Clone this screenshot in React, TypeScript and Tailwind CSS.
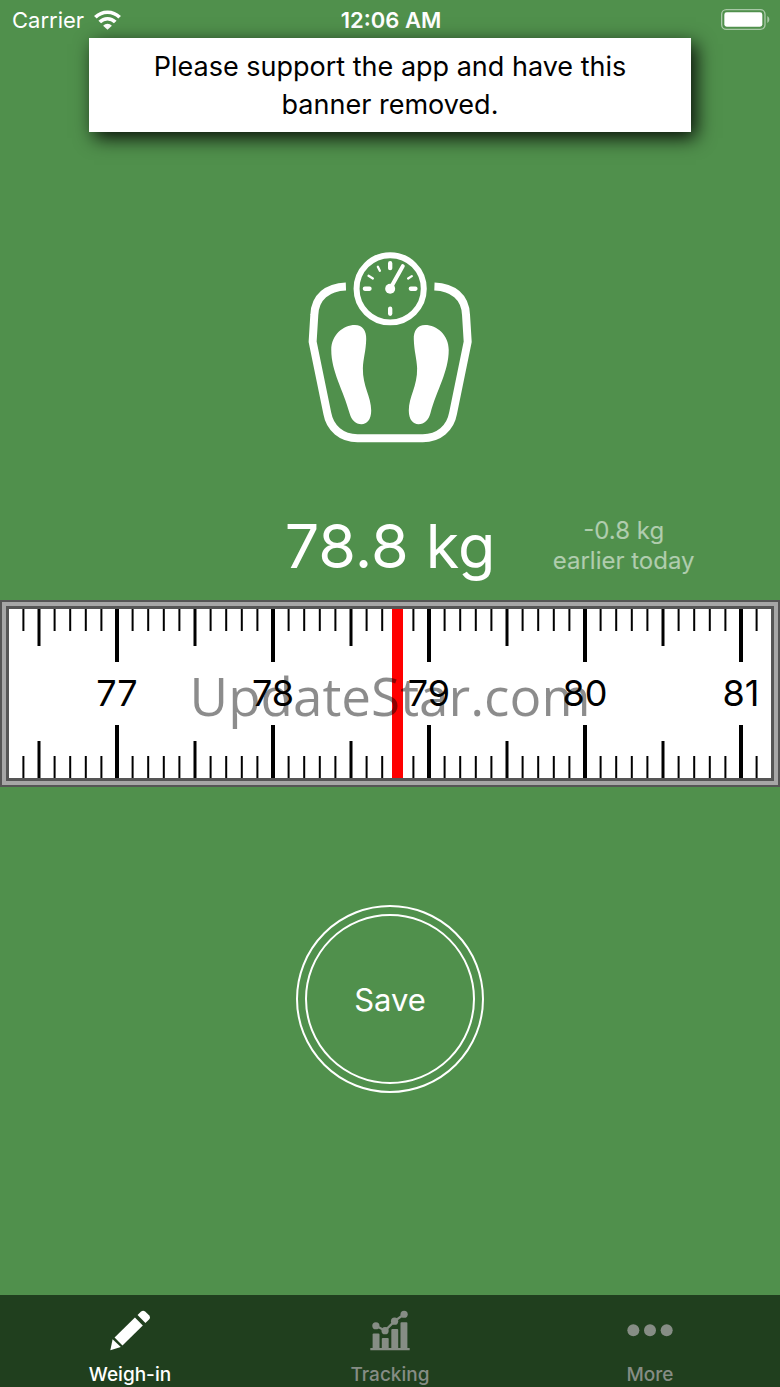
import type { ReactNode } from 'react'

// Weigh-in screen: current reading, the ruler picker and the save button.

const FIRST_TICK = 764 // tenths of a kilo
const LAST_TICK = 811
const UNIT_WIDTH = 156 // drawing units per kilo
const RULER_HEIGHT = 169
const VALUE = 78.8

type Tick = { tenths: number; x: number; length: number; width: number }

const TICKS: Tick[] = []
for (let tenths = FIRST_TICK; tenths <= LAST_TICK; tenths++) {
  const x = 108 + ((tenths - 770) * UNIT_WIDTH) / 10
  if (tenths % 10 === 0) TICKS.push({ tenths, x, length: 53, width: 4 })
  else if (tenths % 5 === 0) TICKS.push({ tenths, x, length: 37, width: 3 })
  else TICKS.push({ tenths, x, length: 22, width: 2 })
}

function WifiIcon() {
  return (
    <svg viewBox="0 0 80 58" className="w-[27px] h-5" aria-hidden="true">
      <g fill="none" stroke="white" strokeWidth="11">
        <path d="M4 21 C24 1 56 1 76 21" />
        <path d="M17 35 C30 22 50 22 63 35" />
      </g>
      <path d="M40 58 L27 46 C34 38 46 38 53 46 Z" fill="white" />
    </svg>
  )
}

function BatteryIcon() {
  return (
    <svg viewBox="0 0 147 63" className="w-[49px] h-[21px]" aria-label="Battery full">
      <rect x="2" y="2" width="130" height="59" rx="14" fill="none" stroke="white" strokeOpacity="0.5" strokeWidth="4" />
      <rect x="10" y="10" width="114" height="43" rx="7" fill="white" />
      <path d="M139 21 C147 25 147 38 139 42 Z" fill="white" fillOpacity="0.5" />
    </svg>
  )
}

const FOOT =
  'M180 255 C203 255 215 272 214 298 C213 335 205 355 204 385 C203 440 229 470 229 512 C229 540 216 553 200 553 C182 553 170 541 164 520 C145 450 109 395 109 330 C109 285 145 255 180 255 Z'
const PLATE =
  'M153 139 C98 141 60 170 58 225 L53 305 L97 520 C105 565 140 595 188 595 H384 C432 595 467 565 475 520 L519 305 L514 225 C512 170 474 141 419 139'

function ScaleIcon() {
  return (
    <svg viewBox="0 0 571 645" className="w-[190px] h-[215px]" aria-hidden="true">
      <g fill="white">
        <path d={FOOT} />
        <path d={FOOT} transform="translate(571 0) scale(-1 1)" />
        <circle cx="286" cy="146" r="15" />
      </g>
      <g fill="none" stroke="white" strokeWidth="24" strokeLinejoin="round">
        <path d={PLATE} />
        <circle cx="286" cy="146" r="101" strokeWidth="18" />
      </g>
      <g stroke="white" strokeLinecap="round">
        <path d="M286 69 V84 M286 206 V221 M210 146 H224 M348 146 H362" strokeWidth="13" />
        <path d="M221 107 L234 115 M249 80 L255 92 M351 108 L340 115" strokeWidth="7" />
        <path d="M286 146 L324 78" strokeWidth="12" />
      </g>
    </svg>
  )
}

function PencilIcon() {
  return (
    <svg viewBox="146 70 128 128" className="w-[42px] h-[42px]" fill="currentColor" aria-hidden="true">
      <path d="M150 196 L157 162 L182 186 Z" />
      <path d="M163 157 L225 96 L249 120 L187 181 Z" />
      <path d="M233 88 L243 78 Q250 72 257 78 L268 89 Q274 96 268 102 L257 113 Z" />
    </svg>
  )
}

function ChartIcon() {
  return (
    <svg viewBox="117 70 126 128" className="w-[42px] h-[42px]" fill="currentColor" aria-hidden="true">
      <path d="M120 189 H240 V196 H120 Z" />
      <path d="M127 190 V148 Q127 145 130 145 H145 Q148 145 148 148 V190 Z" />
      <path d="M155 190 V161 Q155 158 158 158 H173 Q176 158 176 161 V190 Z" />
      <path d="M184 190 V134 Q184 131 187 131 H202 Q205 131 205 134 V190 Z" />
      <path d="M212 190 V113 Q212 110 215 110 H230 Q233 110 233 113 V190 Z" />
      <path d="M137 121 L165 136 L194 107 L223 86" fill="none" stroke="currentColor" strokeWidth="7" />
      <circle cx="137" cy="121" r="11" />
      <circle cx="165" cy="136" r="11" />
      <circle cx="194" cy="107" r="11" />
      <circle cx="223" cy="86" r="11" />
    </svg>
  )
}

function DotsIcon() {
  return (
    <svg viewBox="0 0 138 126" className="w-[46px] h-[42px]" fill="currentColor" aria-hidden="true">
      <circle cx="19" cy="64" r="18" />
      <circle cx="69" cy="64" r="18" />
      <circle cx="119" cy="64" r="18" />
    </svg>
  )
}

function Ruler() {
  const needleX = 388
  return (
    <div className="relative border-2 border-[#555] bg-[#555]">
      <div className="border-4 border-[#a6a6a6]">
        <div className="border-[3px] border-[#555] bg-white">
          <svg viewBox={`0 0 762 ${RULER_HEIGHT}`} className="block w-full" role="img" aria-label={`${VALUE} kg`}>
            {TICKS.map((t) => (
              <g key={t.tenths}>
                <rect x={t.x - t.width / 2} y="0" width={t.width} height={t.length} />
                <rect x={t.x - t.width / 2} y={RULER_HEIGHT - t.length} width={t.width} height={t.length} />
              </g>
            ))}
            <rect x={needleX - 5} y="0" width="11" height={RULER_HEIGHT} fill="red" />
            {TICKS.filter((t) => t.tenths % 10 === 0).map((t) => (
              <text key={t.tenths} x={t.x} y="97" textAnchor="middle" fontSize="36">
                {t.tenths / 10}
              </text>
            ))}
          </svg>
        </div>
      </div>
      <span className="absolute inset-0 flex items-center justify-center pt-1 font-['Open_Sans',sans-serif] text-[53px] leading-none text-black/45 pointer-events-none">
        UpdateStar.com
      </span>
    </div>
  )
}

function Tab({ label, active, children }: { label: string; active?: boolean; children: ReactNode }) {
  return (
    <a
      href="#"
      aria-current={active ? 'page' : undefined}
      className={`flex flex-1 flex-col items-center pt-3.5 ${active ? 'text-white' : 'text-[#868d85]'}`}
    >
      {children}
      <span className="mt-3 text-[19px] leading-6 font-medium">{label}</span>
    </a>
  )
}

export default function App() {
  return (
    <div className="min-h-screen flex flex-col bg-[#50904c] text-white font-[Inter,sans-serif]">
      <header className="grid grid-cols-3 items-center h-[38px] pl-3 pr-2.5">
        <div className="flex items-center gap-2.5 pt-0.5 text-[22px] leading-8">
          Carrier
          <WifiIcon />
        </div>
        <time className="pt-0.5 text-center text-[22px] leading-8 font-semibold">12:06 AM</time>
        <div className="flex justify-end">
          <BatteryIcon />
        </div>
      </header>

      <p className="mx-[89px] px-12 pt-2.5 pb-2 bg-white text-black text-center text-[27px] leading-[38px] shadow-[5px_6px_18px_rgba(0,0,0,0.9)]">
        Please support the app and have this banner removed.
      </p>

      <main className="flex flex-col">
        <div className="flex justify-center mt-[108px]">
          <ScaleIcon />
        </div>

        <div className="grid grid-cols-[1fr_auto_1fr] items-center mt-[52px] pb-[15px] h-[93px]">
          <h1 className="col-start-2 text-[61px] leading-none">78.8 kg</h1>
          <p className="pr-7 text-center text-2xl leading-[30px] text-white/55">
            -0.8 kg
            <br />
            earlier today
          </p>
        </div>

        <Ruler />

        <button
          type="button"
          className="self-center mt-[118px] p-[7px] size-[188px] rounded-full border-2 border-white text-[31px] cursor-pointer"
        >
          <span className="flex items-center justify-center size-full pt-0.5 rounded-full border-2 border-white">Save</span>
        </button>
      </main>

      <nav className="mt-auto flex h-[92px] bg-[#203f1e]">
        <Tab label="Weigh-in" active>
          <PencilIcon />
        </Tab>
        <Tab label="Tracking">
          <ChartIcon />
        </Tab>
        <Tab label="More">
          <DotsIcon />
        </Tab>
      </nav>
    </div>
  )
}
